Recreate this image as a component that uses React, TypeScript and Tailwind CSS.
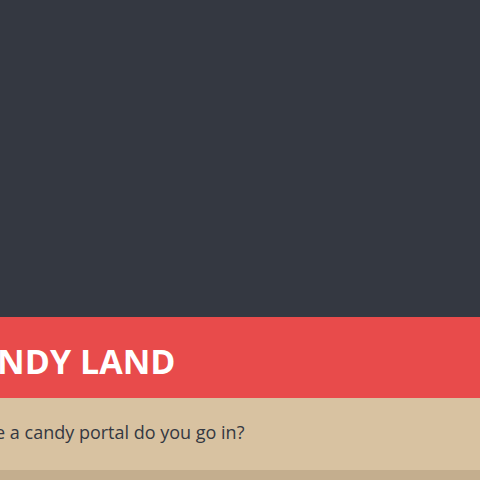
export default function App() {
  return (
    <div className="h-[480px] w-[480px] overflow-hidden bg-[#343841] flex flex-col" style={{ fontFamily: '"Open Sans", sans-serif' }}>
      <div className="h-[317px] shrink-0" />
      <div className="h-[81px] shrink-0 bg-[#e84b4b]">
        <h1 className="ml-[-48px] pt-[27px] whitespace-nowrap text-[34px] font-bold leading-none text-white">CANDY LAND</h1>
      </div>
      <div className="h-[72px] shrink-0 bg-[#d8c2a1]">
        <p className="ml-[-62px] pt-[25px] whitespace-nowrap text-[18px] leading-none text-[#343841]">Imagine a candy portal do you go in?</p>
      </div>
      <div className="flex-1 bg-[#c4ae8e]" />
    </div>
  );
}
